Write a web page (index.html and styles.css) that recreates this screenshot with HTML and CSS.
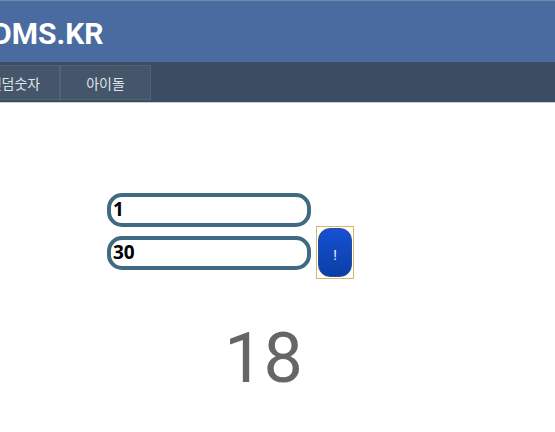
FILE: index.html
```html
<!DOCTYPE html>
<html lang="ko">
<head>
  <meta charset="UTF-8">
  <meta name="viewport" content="width=device-width, initial-scale=1.0">
  <title>RDMS.KR</title>
  <link rel="stylesheet" href="styles.css">
</head>
<body>
  <header class="top">
    <h1 class="brand">RDMS.KR</h1>
  </header>
  <nav class="menu">
    <a class="tab tab-first" href="#">랜덤숫자</a>
    <a class="tab" href="#">아이돌</a>
  </nav>
  <main class="page">
    <form class="range">
      <div class="fields">
        <input class="num" type="text" name="min" value="1">
        <input class="num" type="text" name="max" value="30">
      </div>
      <div class="go-wrap">
        <button class="go" type="button">!</button>
      </div>
    </form>
    <div class="result">18</div>
  </main>
</body>
</html>
```

FILE: styles.css
```css
html, body {
  margin: 0;
  padding: 0;
  background: #fff;
  overflow: hidden;
}
body {
  font-family: Roboto, "Noto Sans", "Noto Sans CJK KR", sans-serif;
}
.top {
  height: 62px;
  box-sizing: border-box;
  background: #4a6b9f;
  border-top: 1px solid #6f89ad;
  padding-top: 18px;
}
.brand {
  margin: 0 0 0 -27px;
  color: #fff;
  font-family: Roboto, "Liberation Sans", sans-serif;
  font-size: 30px;
  font-weight: bold;
  line-height: 30px;
}
.menu {
  background: #3c4d63;
  border-bottom: 1px solid #c9cdd2;
  display: flex;
  padding: 3px 0 2px;
  box-sizing: border-box;
  height: 41px;
}
.tab {
  display: flex;
  align-items: center;
  justify-content: center;
  width: 89px;
  background: #45566b;
  border: 1px solid #526378;
  color: #dde3ea;
  font-family: "Noto Sans CJK KR", sans-serif;
  font-size: 14px;
  text-decoration: none;
}
.tab-first {
  margin-left: -30px;
  border-left: none;
}
.page {
  padding-top: 90px;
}
.range {
  display: flex;
  align-items: flex-end;
  padding-left: 107px;
}
.fields {
  display: flex;
  flex-direction: column;
  gap: 9px;
}
.num {
  width: 204px;
  height: 34px;
  box-sizing: border-box;
  border: 4px solid #3f6a82;
  border-radius: 15px;
  padding: 0 0 2px 2px;
  background: #fff;
  color: #000;
  font-family: "Open Sans", "Noto Sans", sans-serif;
  font-size: 19px;
  font-weight: bold;
  outline: none;
}
.go-wrap {
  margin: 0 0 -9px 5px;
  border: 1px solid #d6b56c;
  padding: 1px;
}
.go {
  display: block;
  width: 34px;
  height: 49px;
  border: 1px solid #2b4f95;
  border-radius: 12px;
  background: linear-gradient(#1650d4, #0b3fa6);
  color: #e8eeff;
  font-size: 15px;
  padding: 4px 0 0;
}
.result {
  margin-top: 53px;
  margin-left: -28px;
  text-align: center;
  color: #666;
  font-family: Roboto, sans-serif;
  font-weight: 400;
  font-size: 70px;
  line-height: 1;
}
```
